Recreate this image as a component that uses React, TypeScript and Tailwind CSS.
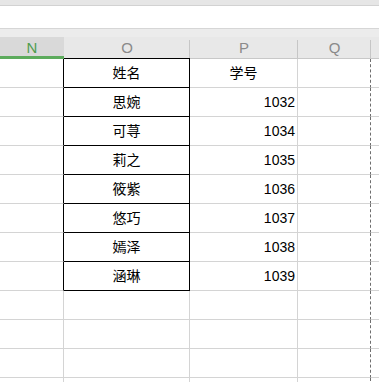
import React from "react";

const rows: [string, string][] = [
  ["姓名", "学号"],
  ["思婉", "1032"],
  ["可荨", "1034"],
  ["莉之", "1035"],
  ["筱紫", "1036"],
  ["悠巧", "1037"],
  ["嫣泽", "1038"],
  ["涵琳", "1039"],
];

const FONT = { fontFamily: '"Liberation Sans", "Noto Sans CJK SC", sans-serif' };

function HeaderCell({ label, w, active, bottom }: { label: string; w: string; active?: boolean; bottom: string }) {
  return (
    <div className={`relative flex items-center justify-center ${w} h-[22px] border-b ${bottom} ${active ? "bg-[#d9d9d9]" : ""}`}>
      <span className={`text-[15px] leading-none ${active ? "text-[#4f9d4f]" : "text-[#8a8a8a]"}`}>{label}</span>
      {active ? <span className="absolute left-0 right-0 bottom-0 h-[2px] bg-[#5cab5c]" /> : null}
      {!active ? <span className="absolute right-0 top-[3px] bottom-0 w-px bg-[#c6c6c6]" /> : null}
    </div>
  );
}

export default function App() {
  const total = 12;
  return (
    <div className="w-[379px] h-[382px] overflow-hidden bg-white flex flex-col" style={FONT}>
      <div className="h-[6px] shrink-0 bg-[#e6e6e6] border-b border-[#d2d2d2]" />
      <div className="h-[23px] shrink-0 bg-white border-b border-[#d6d6d6]" />
      <div className="h-[8px] shrink-0 bg-[#ececec]" />
      <div className="flex shrink-0 bg-[#e8e8e8]">
        <HeaderCell label="N" w="w-[64px]" active bottom="border-[#5cab5c]" />
        <HeaderCell label="O" w="w-[126px]" bottom="border-black" />
        <HeaderCell label="P" w="w-[108px]" bottom="border-[#c8c8c8]" />
        <HeaderCell label="Q" w="w-[73px]" bottom="border-[#c8c8c8]" />
        <div className="flex-1 h-[22px] border-b border-[#c8c8c8]" />
      </div>
      {Array.from({ length: total }).map((_, i) => {
        const r = rows[i];
        const inTable = i < rows.length;
        return (
          <div key={i} className="flex h-[29px] shrink-0">
            <div className={`w-[64px] border-b border-[#d4d4d4] border-r ${inTable ? "border-r-black" : "border-r-[#d4d4d4]"}`} />
            <div
              className={`w-[126px] flex items-center justify-center border-r border-b text-[14px] text-black ${
                inTable ? "border-black" : "border-[#d4d4d4]"
              }`}
            >
              {r ? r[0] : ""}
            </div>
            <div
              className={`w-[108px] flex items-center border-r border-b border-[#d4d4d4] text-[14px] text-black ${
                i === 0 ? "justify-center" : "justify-end pr-[2px]"
              }`}
            >
              {r ? r[1] : ""}
            </div>
            <div className="w-[73px] border-b border-[#d4d4d4] border-r border-r-[#6e6e6e]" style={{ borderRightStyle: "dashed" }} />
            <div className="flex-1 border-b border-[#d4d4d4]" />
          </div>
        );
      })}
    </div>
  );
}
